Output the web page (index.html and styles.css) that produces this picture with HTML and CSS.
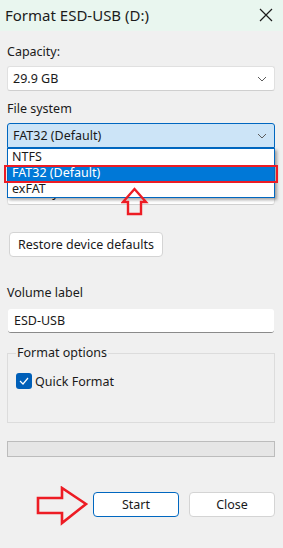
FILE: index.html
```html
<!DOCTYPE html>
<html lang="en">
<head>
    <meta charset="UTF-8">
    <meta name="viewport" content="width=device-width, initial-scale=1.0">
    <title>Format ESD-USB (D:)</title>
    <link rel="stylesheet" href="styles.css">
</head>
<body>
    <div class="window">
        <!-- Title bar -->
        <div class="titlebar">
            <span class="title">Format ESD-USB (D:)</span>
            <svg class="close-icon" width="14" height="14" viewBox="0 0 14 14">
                <path d="M1 1 L13 13 M13 1 L1 13" stroke="#1b1b1b" stroke-width="1.2" fill="none"/>
            </svg>
        </div>

        <div class="content">
            <div class="field">
                <label>Capacity:</label>
                <div class="combo">
                    <span>29.9 GB</span>
                    <svg class="chevron" width="10" height="6" viewBox="0 0 10 6"><path d="M1 1 L5 5 L9 1" stroke="#5c5c5c" fill="none"/></svg>
                </div>
            </div>

            <div class="field fs-field">
                <label>File system</label>
                <div class="combo combo-open">
                    <span>FAT32 (Default)</span>
                    <svg class="chevron" width="10" height="6" viewBox="0 0 10 6"><path d="M1 1 L5 5 L9 1" stroke="#5c5c5c" fill="none"/></svg>
                </div>
                <!-- Open dropdown list -->
                <ul class="dropdown">
                    <li>NTFS</li>
                    <li class="selected">FAT32 (Default)</li>
                    <li>exFAT</li>
                    <div class="mark-box"></div>
                </ul>
            </div>

            <div class="field">
                <label>Allocation unit size</label>
                <div class="combo">
                    <span>4096 bytes</span>
                    <svg class="chevron" width="10" height="6" viewBox="0 0 10 6"><path d="M1 1 L5 5 L9 1" stroke="#5c5c5c" fill="none"/></svg>
                </div>
            </div>

            <button class="btn restore">Restore device defaults</button>

            <div class="field volume">
                <label>Volume label</label>
                <div class="textbox">ESD-USB</div>
            </div>

            <fieldset class="options">
                <legend>Format options</legend>
                <div class="check-row">
                    <span class="checkbox">
                        <svg width="10" height="8" viewBox="0 0 10 8"><path d="M1 4 L4 7 L9 1" stroke="#fff" stroke-width="1.2" fill="none"/></svg>
                    </span>
                    <span>Quick Format</span>
                </div>
            </fieldset>

            <div class="progress"></div>

            <div class="actions">
                <button class="btn btn-default">Start</button>
                <button class="btn">Close</button>
            </div>
        </div>

        <!-- Red annotation arrows -->
        <svg class="arrow-up" width="28" height="30" viewBox="0 0 28 30">
            <polygon points="13.5,2 25,15 20,15 20,27 7,27 7,15 2,15" fill="none" stroke="#ed1c24" stroke-width="2.4"/>
        </svg>
        <svg class="arrow-right" width="54" height="40" viewBox="0 0 54 40">
            <polygon points="3,12 27,12 27,2 51,18 27,37 27,27 3,27" fill="none" stroke="#ed1c24" stroke-width="2.6"/>
        </svg>
    </div>
</body>
</html>
```

FILE: styles.css
```css
body {
    margin: 0;
    padding: 0;
    font-family: "Noto Sans", "Open Sans", sans-serif;
    font-size: 12.5px;
    color: #1a1a1a;
    background-color: #f0f0f0;
}
.window {
    position: relative;
    width: 283px;
    height: 548px;
    background-color: #f0f0f0;
}
.titlebar {
    height: 31px;
    display: flex;
    align-items: center;
    justify-content: space-between;
    padding: 0 10px 2px 5px;
    box-sizing: border-box;
    background-color: #e9f6ef;
}
.title {
    font-size: 15px;
    color: #1c1c1c;
}
.content {
    display: flex;
    flex-direction: column;
    padding: 13px 8px 0 7px;
}
.field {
    display: flex;
    flex-direction: column;
    gap: 6px;
    margin-bottom: 10px;
}
.field label {
    line-height: 16px;
}
.combo {
    height: 25px;
    box-sizing: border-box;
    display: flex;
    align-items: center;
    justify-content: space-between;
    padding: 0 7px 0 5px;
    background: white;
    border: 1px solid #e0e0e0;
    border-bottom-color: #cfcfcf;
    border-radius: 3px;
}
.combo-open {
    background-color: #cce4f7;
    border-color: #0067c0;
    border-radius: 3px 3px 0 0;
}
.fs-field {
    position: relative;
}
.dropdown {
    position: absolute;
    top: 100%;
    left: 0;
    right: 0;
    margin: 0;
    padding: 0;
    list-style: none;
    background: white;
    border: 1px solid #0067c0;
    box-shadow: 2px 2px 3px rgba(0,0,0,0.35);
    z-index: 2;
}
.dropdown li {
    height: 16px;
    line-height: 16px;
    padding-left: 4px;
}
.dropdown li.selected {
    background-color: #0078d7;
    color: white;
}
.mark-box {
    position: absolute;
    top: 16px;
    left: -4px;
    right: -4px;
    height: 18px;
    box-sizing: border-box;
    border: 2px solid #ed1c24;
}
.btn {
    font-family: inherit;
    font-size: 12.5px;
    color: #1a1a1a;
    height: 25px;
    background: white;
    border: 1px solid #d4d4d4;
    border-radius: 4px;
    cursor: pointer;
}
.restore {
    align-self: flex-start;
    margin: 17px 0 0 2px;
    width: 154px;
    padding: 0;
}
.volume {
    margin-top: 28px;
    gap: 8px;
    margin-bottom: 0;
}
.textbox {
    height: 24px;
    box-sizing: border-box;
    display: flex;
    align-items: center;
    padding: 0 6px;
    background: white;
    border-bottom: 1px solid #8a8a8a;
    border-radius: 3px;
    margin-left: 1px;
    margin-right: 1px;
}
.options {
    margin: 12px 0 0 0;
    padding: 12px 8px 33px 8px;
    border: 1px solid #dcdcdc;
}
.options legend {
    padding: 0 1px;
    line-height: 16px;
}
.check-row {
    display: flex;
    align-items: center;
    gap: 3px;
    height: 16px;
}
.checkbox {
    width: 16px;
    height: 16px;
    display: flex;
    align-items: center;
    justify-content: center;
    background-color: #005fb8;
    border-radius: 3px;
}
.progress {
    height: 16px;
    margin-top: 18px;
    box-sizing: border-box;
    border: 1px solid #bcbcbc;
    background-color: #e6e6e6;
}
.actions {
    display: flex;
    justify-content: flex-end;
    gap: 10px;
    margin-top: 35px;
}
.actions .btn {
    width: 86px;
}
.btn-default {
    border-color: #0067c0;
}
.arrow-up {
    position: absolute;
    left: 121px;
    top: 187px;
    z-index: 3;
}
.arrow-right {
    position: absolute;
    left: 35px;
    top: 486px;
}
```
